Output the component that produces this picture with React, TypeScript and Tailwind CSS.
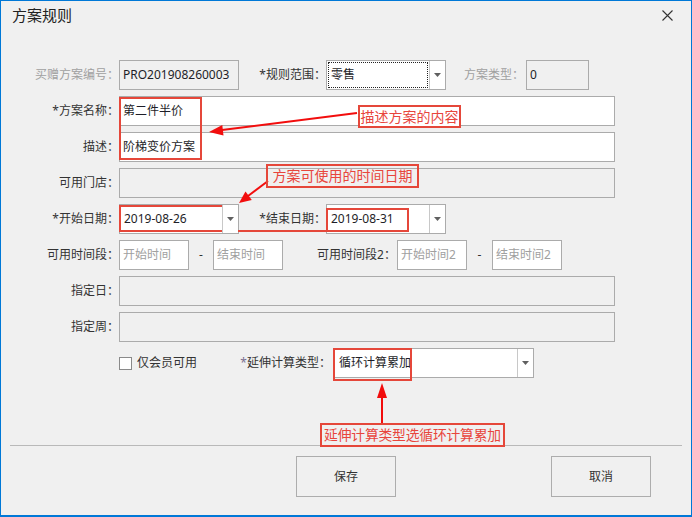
import React from "react";

const FONT = "font-['Noto_Sans','Noto_Sans_CJK_SC',sans-serif]";

function Box({
  w,
  value,
  placeholder,
  disabled,
}: {
  w: string;
  value?: string;
  placeholder?: string;
  disabled?: boolean;
}) {
  return (
    <div
      className={`${w} h-[30px] shrink-0 border border-[#ababab] ${
        disabled ? "bg-[#f0f0f0]" : "bg-white"
      } flex items-center px-[3px] text-[12px]`}
    >
      {value ? (
        <span className="text-[#1e1e28]">{value}</span>
      ) : placeholder ? (
        <span className="text-[#a0a0a0]">{placeholder}</span>
      ) : null}
    </div>
  );
}

function Combo({ w, value, focus }: { w: string; value: string; focus?: boolean }) {
  return (
    <div className={`${w} h-[30px] shrink-0 border border-[#ababab] bg-white flex text-[12px]`}>
      <div className="flex-1 flex items-center p-px">
        <div
          className={`flex-1 h-full flex items-center px-[2px] ${
            focus ? "border border-dotted border-[#222]" : "border border-transparent"
          }`}
        >
          <span className="text-[#1e1e28]">{value}</span>
        </div>
      </div>
      <div className="w-[16px] border-l border-[#c8c8c8] bg-white flex items-center justify-center">
        <svg width="7" height="4" viewBox="0 0 7 4">
          <path d="M0 0 H7 L3.5 4 Z" fill="#606060" />
        </svg>
      </div>
    </div>
  );
}

function Label({ w, children, gray }: { w: string; children: React.ReactNode; gray?: boolean }) {
  return (
    <div
      className={`${w} shrink-0 text-right text-[12px] whitespace-nowrap ${
        gray ? "text-[#a0a0a0]" : "text-[#333]"
      }`}
    >
      {children}
      <span className="mr-[-5px]">：</span>
    </div>
  );
}

export default function App() {
  return (
    <div
      className={`${FONT} relative w-[692px] h-[517px] border border-b-2 border-[#0078d7] bg-[#f0f0f0] overflow-hidden`}
    >
      {/* title bar */}
      <div className="h-[29px] flex items-center justify-between pl-[11px] pr-[18px]">
        <span className="text-[15px] text-[#222]">方案规则</span>
        <svg width="11" height="11" viewBox="0 0 11 11">
          <path d="M0.5 0.5 L10.5 10.5 M10.5 0.5 L0.5 10.5" stroke="#333" strokeWidth="1.1" />
        </svg>
      </div>

      {/* form */}
      <div className="mt-[30px] flex flex-col gap-[6px]">
        <div className="flex items-center">
          <Label w="w-[113px]" gray>
            买赠方案编号
          </Label>
          <div className="ml-[5px]">
            <Box w="w-[120px]" value="PRO201908260003" disabled />
          </div>
          <Label w="w-[82px]">*规则范围</Label>
          <div className="ml-[5px]">
            <Combo w="w-[120px]" value="零售" focus />
          </div>
          <Label w="w-[73px]" gray>
            方案类型
          </Label>
          <div className="ml-[7px]">
            <Box w="w-[63px]" value="0" disabled />
          </div>
        </div>

        <div className="flex items-center">
          <Label w="w-[113px]">*方案名称</Label>
          <div className="ml-[5px]">
            <Box w="w-[496px]" value="第二件半价" />
          </div>
        </div>

        <div className="flex items-center">
          <Label w="w-[113px]">描述</Label>
          <div className="ml-[5px]">
            <Box w="w-[496px]" value="阶梯变价方案" />
          </div>
        </div>

        <div className="flex items-center">
          <Label w="w-[113px]">可用门店</Label>
          <div className="ml-[5px]">
            <Box w="w-[496px]" disabled />
          </div>
        </div>

        <div className="flex items-center">
          <Label w="w-[113px]">*开始日期</Label>
          <div className="ml-[5px]">
            <Combo w="w-[120px]" value="2019-08-26" />
          </div>
          <Label w="w-[82px]">*结束日期</Label>
          <div className="ml-[5px]">
            <Combo w="w-[120px]" value="2019-08-31" />
          </div>
        </div>

        <div className="flex items-center">
          <Label w="w-[113px]">可用时间段</Label>
          <div className="ml-[5px]">
            <Box w="w-[70px]" placeholder="开始时间" />
          </div>
          <div className="w-[24px] text-center text-[12px] text-[#333]">-</div>
          <Box w="w-[70px]" placeholder="结束时间" />
          <Label w="w-[108px]">可用时间段2</Label>
          <div className="ml-[6px]">
            <Box w="w-[70px]" placeholder="开始时间2" />
          </div>
          <div className="w-[25px] text-center text-[12px] text-[#333]">-</div>
          <Box w="w-[70px]" placeholder="结束时间2" />
        </div>

        <div className="flex items-center">
          <Label w="w-[113px]">指定日</Label>
          <div className="ml-[5px]">
            <Box w="w-[496px]" disabled />
          </div>
        </div>

        <div className="flex items-center">
          <Label w="w-[113px]">指定周</Label>
          <div className="ml-[5px]">
            <Box w="w-[496px]" disabled />
          </div>
        </div>

        <div className="flex items-center h-[30px]">
          <div className="w-[118px] shrink-0" />
          <div className="w-[13px] h-[13px] border border-[#8a8a8a] bg-white shrink-0" />
          <span className="ml-[5px] w-[61px] text-[12px] text-[#333] shrink-0">仅会员可用</span>
          <Label w="w-[128px]">
            <span className="text-[#7a6f90]">*</span>延伸计算类型
          </Label>
          <div className="ml-[8px]">
            <Combo w="w-[200px]" value="循环计算累加" />
          </div>
        </div>
      </div>

      {/* separator */}
      <div className="mt-[67px] ml-[9px] w-[672px] h-px bg-[#b9b9b9]" />

      {/* buttons */}
      <div className="mt-[10px] ml-[295px] flex gap-[155px]">
        <button className="w-[100px] h-[41px] border border-[#adadad] bg-[#f0f0f0] text-[12px] text-[#333]">
          保存
        </button>
        <button className="w-[100px] h-[41px] border border-[#adadad] bg-[#f0f0f0] text-[12px] text-[#333]">
          取消
        </button>
      </div>

      {/* annotations overlay */}
      <svg
        className="absolute -left-px -top-px pointer-events-none"
        width="692"
        height="517"
        viewBox="0 0 692 517"
      >
        <rect x="120" y="98" width="81" height="61" fill="none" stroke="#e5473a" strokeWidth="2" />
        <path
          d="M222 206 H120 V231 H222 M238 231 H408 V209 H327 V231"
          fill="none"
          stroke="#e5473a"
          strokeWidth="2"
        />
        <rect x="334" y="349" width="77" height="31" fill="none" stroke="#e5473a" strokeWidth="2" />
        <line x1="357" y1="113" x2="222" y2="130" stroke="#f20d0d" strokeWidth="2" />
        <polygon points="209,132 223.5,135.4 222.3,125" fill="#f20d0d" />
        <line x1="268" y1="181" x2="248" y2="196" stroke="#f20d0d" strokeWidth="2" />
        <polygon points="239,203 251.8,200 245.5,191.6" fill="#f20d0d" />
        <line x1="382" y1="423" x2="382" y2="396" stroke="#f20d0d" strokeWidth="2" />
        <polygon points="382,383 377,398 387,398" fill="#f20d0d" />
      </svg>

      <div className="absolute left-[357px] top-[104px] w-[103px] h-[23px] border-2 border-[#e5473a] bg-white flex items-center justify-center text-[14px] leading-none whitespace-nowrap text-[#e8453c]">
        描述方案的内容
      </div>
      <div className="absolute left-[265px] top-[163px] w-[153px] h-[24px] border-2 border-[#e5473a] flex items-center justify-center text-[14px] leading-none whitespace-nowrap text-[#e8453c]">
        方案可使用的时间日期
      </div>
      <div className="absolute left-[319px] top-[422px] w-[185px] h-[24px] border-2 border-[#e5473a] flex items-center justify-center text-[13.8px] leading-none whitespace-nowrap tracking-[-0.2px] text-[#e8453c]">
        延伸计算类型选循环计算累加
      </div>
    </div>
  );
}
